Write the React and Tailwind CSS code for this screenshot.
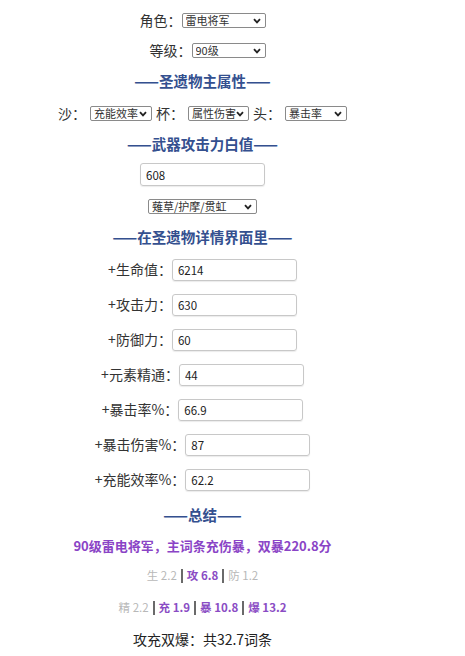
import React from 'react';

const font = { fontFamily: '"Noto Sans CJK SC", "Noto Sans", sans-serif' };

const Select = ({ value, width }) => (
  <div className="relative inline-flex" style={{ width }}>
    <select
      defaultValue={value}
      className="appearance-none w-full h-[15px] border border-[#8a8a8a] rounded-[2px] bg-white text-[11px] leading-[13px] pl-[3px] text-[#333] outline-none"
    >
      <option value={value}>{value}</option>
    </select>
    <svg
      className="absolute right-[5px] top-[5px] pointer-events-none"
      width="8"
      height="6"
      viewBox="0 0 8 6"
    >
      <path d="M1 1.2 L4 4.4 L7 1.2" fill="none" stroke="#222" strokeWidth="1.8" />
    </svg>
  </div>
);

const Heading = ({ children, className = '' }) => (
  <div className={`flex items-center justify-center font-bold text-[14.5px] text-[#34508f] ${className}`}>
    ——{children}——
  </div>
);

const StatRow = ({ label, value }) => (
  <div className="h-[35px] flex items-center justify-center">
    <span className="text-[14px] text-[#333]">{label}：</span>
    <input
      type="text"
      defaultValue={value}
      className="w-[125px] h-[22px] border border-[#c8c8c8] rounded-[3px] shadow-[0_1px_1px_rgba(0,0,0,0.08)] px-[5px] text-[11.5px] text-[#222] outline-none"
    />
  </div>
);

const Gray = ({ children }) => <span className="text-[#b8b8b8]">{children}</span>;
const Purple = ({ children }) => <span className="text-[#8a4cc4] font-bold">{children}</span>;
const Bar = () => <span className="inline-block w-[2px] h-[14px] bg-[#6a6a6a] mx-[4px] align-middle" />;

export default function App() {
  return (
    <div className="min-h-screen bg-white" style={font}>
      <div className="w-[405px] pt-[5px] flex flex-col text-[#333]">
        <div className="h-[30px] flex items-center justify-center">
          <span className="text-[14px]">角色：</span>
          <Select value="雷电将军" width={84} />
        </div>
        <div className="h-[30px] flex items-center justify-center pl-[10px]">
          <span className="text-[14px]">等级：</span>
          <Select value="90级" width={74} />
        </div>

        <Heading className="h-[32px]">圣遗物主属性</Heading>

        <div className="h-[32px] flex items-center justify-center gap-[4px]">
          <span className="text-[14px]">沙：</span>
          <Select value="充能效率" width={62} />
          <span className="text-[14px]">杯：</span>
          <Select value="属性伤害" width={61} />
          <span className="text-[14px]">头：</span>
          <Select value="暴击率" width={62} />
        </div>

        <Heading className="h-[30px]">武器攻击力白值</Heading>

        <div className="h-[31px] flex items-center justify-center">
          <input
            type="text"
            defaultValue="608"
            className="w-[125px] h-[23px] border border-[#c8c8c8] rounded-[3px] shadow-[0_1px_1px_rgba(0,0,0,0.08)] px-[5px] text-[11.5px] text-[#222] outline-none"
          />
        </div>
        <div className="h-[32px] flex items-center justify-center">
          <Select value="薙草/护摩/贯虹" width={109} />
        </div>

        <Heading className="h-[30px]">在圣遗物详情界面里</Heading>

        <StatRow label="+生命值" value="6214" />
        <StatRow label="+攻击力" value="630" />
        <StatRow label="+防御力" value="60" />
        <StatRow label="+元素精通" value="44" />
        <StatRow label="+暴击率%" value="66.9" />
        <StatRow label="+暴击伤害%" value="87" />
        <StatRow label="+充能效率%" value="62.2" />

        <Heading className="h-[35px]">总结</Heading>

        <div className="h-[28px] flex items-center justify-center text-[13px] font-bold text-[#8a44c6]">
          90级雷电将军，主词条充伤暴，双暴220.8分
        </div>

        <div className="h-[32px] flex items-center justify-center text-[11.5px]">
          <Gray>生 2.2</Gray>
          <Bar />
          <Purple>攻 6.8</Purple>
          <Bar />
          <Gray>防 1.2</Gray>
        </div>
        <div className="h-[31px] flex items-center justify-center text-[11.5px]">
          <Gray>精 2.2</Gray>
          <Bar />
          <Purple>充 1.9</Purple>
          <Bar />
          <Purple>暴 10.8</Purple>
          <Bar />
          <Purple>爆 13.2</Purple>
        </div>

        <div className="h-[32px] flex items-center justify-center text-[14px] text-[#222]">
          攻充双爆：共32.7词条
        </div>
      </div>
    </div>
  );
}
